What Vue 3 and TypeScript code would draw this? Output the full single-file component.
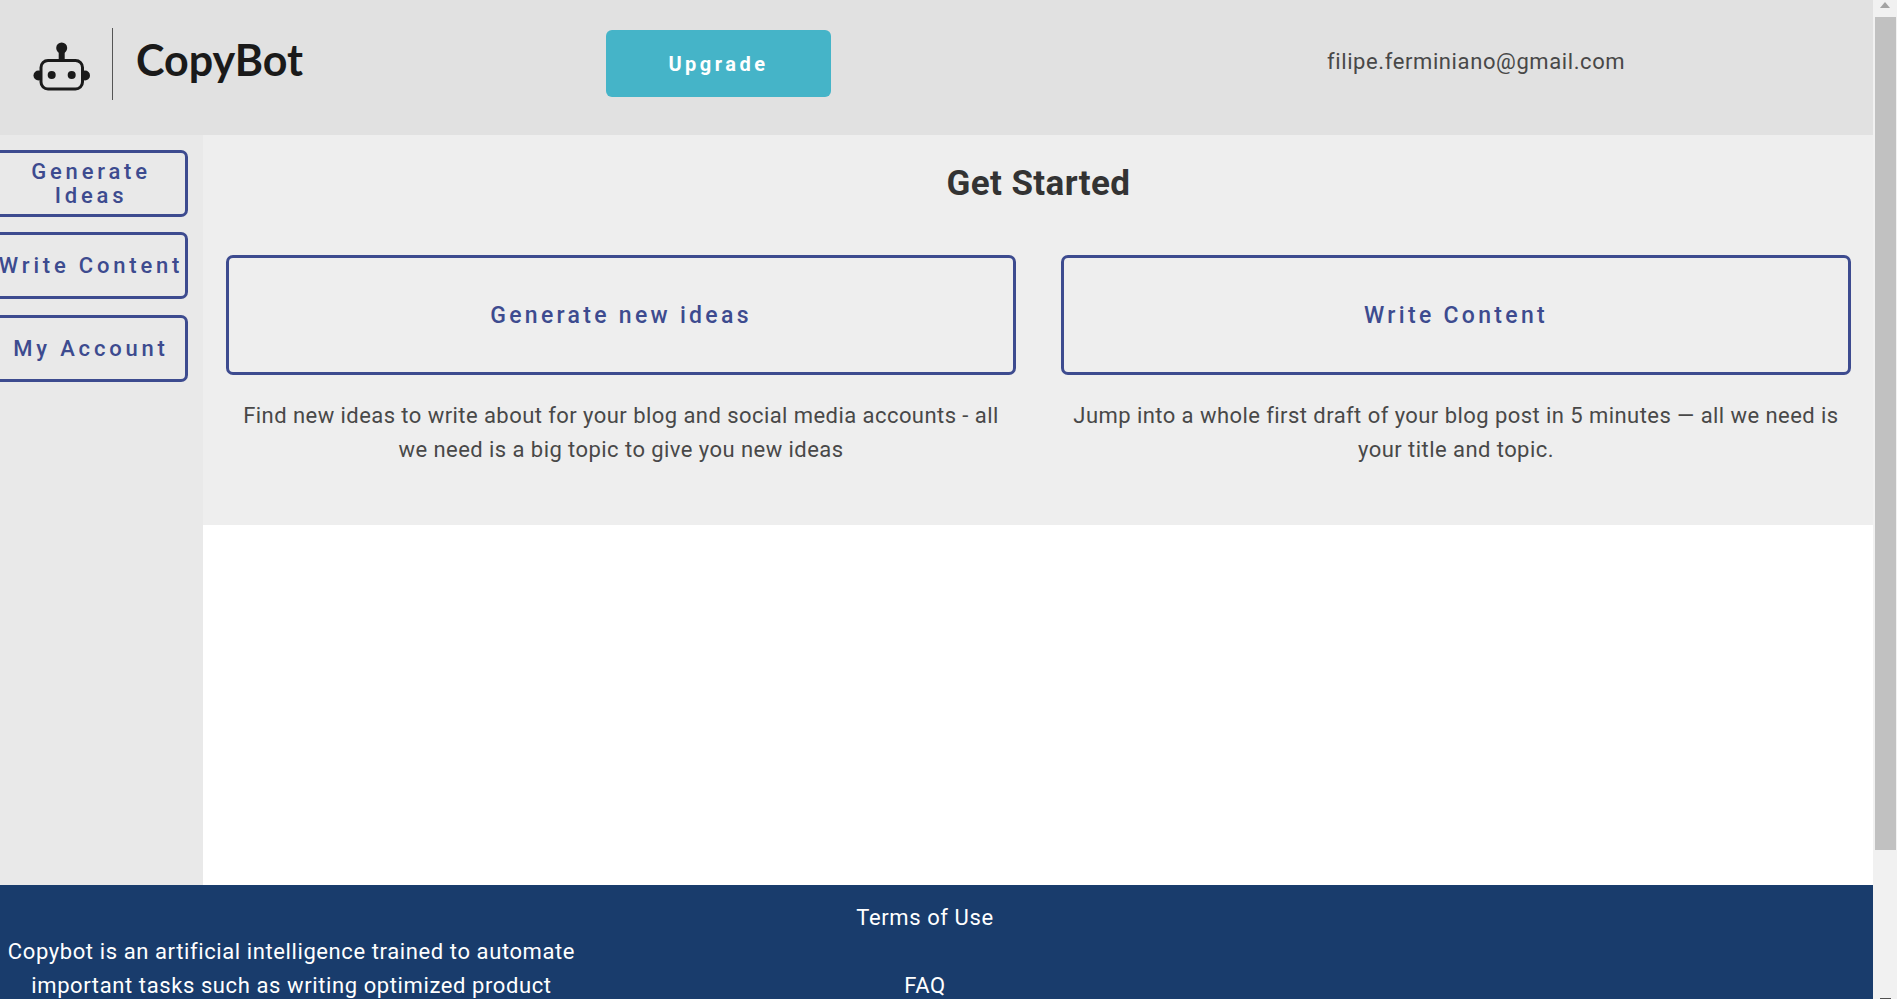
<script setup lang="ts">
const navItems: string[] = ['Generate Ideas', 'Write Content', 'My Account']
const cards: { title: string; text: string }[] = [
  {
    title: 'Generate new ideas',
    text: 'Find new ideas to write about for your blog and social media accounts - all we need is a big topic to give you new ideas',
  },
  {
    title: 'Write Content',
    text: 'Jump into a whole first draft of your blog post in 5 minutes — all we need is your title and topic.',
  },
]
</script>

<template>
  <div class="window">
    <div class="page">
      <header class="header">
        <div class="brand">
          <svg class="bot" viewBox="0 0 57 49" width="57" height="49" aria-hidden="true">
            <circle cx="28.7" cy="6" r="5.5" fill="#1a1a1a" />
            <rect x="25.7" y="8" width="6" height="10" fill="#1a1a1a" />
            <circle cx="5.5" cy="33.5" r="5" fill="#1a1a1a" />
            <circle cx="52" cy="33.5" r="5" fill="#1a1a1a" />
            <rect x="8" y="18.5" width="41.5" height="28.5" rx="7" fill="#e1e1e1" stroke="#1a1a1a" stroke-width="3" />
            <circle cx="18.7" cy="33" r="4" fill="#1a1a1a" />
            <circle cx="38.7" cy="33" r="4" fill="#1a1a1a" />
          </svg>
          <span class="divider"></span>
          <span class="logo-text">CopyBot</span>
        </div>
        <button class="upgrade" type="button">Upgrade</button>
        <span class="email">filipe.ferminiano@gmail.com</span>
      </header>
      <div class="body">
        <aside class="sidebar">
          <button v-for="item in navItems" :key="item" class="nav-btn" type="button">{{ item }}</button>
        </aside>
        <main class="main">
          <section class="panel">
            <h1 class="title">Get Started</h1>
            <div class="cards">
              <div v-for="card in cards" :key="card.title" class="card">
                <button class="card-btn" type="button">{{ card.title }}</button>
                <p class="card-text">{{ card.text }}</p>
              </div>
            </div>
          </section>
        </main>
      </div>
      <footer class="footer">
        <p class="about">Copybot is an artificial intelligence trained to automate important tasks such as writing optimized product</p>
        <ul class="links">
          <li>Terms of Use</li>
          <li class="spacer"></li>
          <li>FAQ</li>
        </ul>
      </footer>
    </div>
    <div class="scrollbar">
      <span class="arrow-up"></span>
      <span class="thumb"></span>
      <span class="arrow-down"></span>
    </div>
  </div>
</template>

<style>
html, body { margin: 0; overflow: hidden; }
</style>

<style scoped>
.window {
  display: flex;
  width: 1897px;
  height: 999px;
  overflow: hidden;
  font-family: Roboto, "Liberation Sans", sans-serif;
}
.page {
  width: 1873px;
  flex: none;
  display: flex;
  flex-direction: column;
  height: 999px;
  overflow: hidden;
}
.header {
  height: 135px;
  flex: none;
  background: #e1e1e1;
  display: flex;
  align-items: flex-start;
  box-sizing: border-box;
  padding-left: 33px;
}
.brand {
  width: 573px;
  flex: none;
  display: flex;
  align-items: flex-start;
}
.bot { margin-top: 42px; flex: none; }
.divider {
  width: 1px;
  height: 72px;
  margin: 28px 23px 0 22px;
  background: #555;
}
.logo-text {
  margin-top: 30px;
  font-family: Lato, sans-serif;
  font-weight: 700;
  font-size: 43px;
  line-height: 60px;
  color: #1a1a1a;
}
.upgrade {
  width: 225px;
  height: 67px;
  margin-top: 30px;
  flex: none;
  border: 0;
  border-radius: 6px;
  background: #45b4c8;
  color: #fff;
  font-family: inherit;
  font-weight: 700;
  font-size: 20px;
  letter-spacing: 3.5px;
  padding: 1px 0 0;
}
.email {
  margin: 47px 0 0 496px;
  font-size: 22px;
  line-height: 30px;
  letter-spacing: 0.6px;
  color: #484848;
}
.body {
  flex: none;
  height: 750px;
  display: flex;
}
.sidebar {
  width: 203px;
  flex: none;
  background: #e9e9e9;
  box-sizing: border-box;
  padding-top: 15px;
  display: flex;
  flex-direction: column;
  gap: 15px;
  overflow: hidden;
}
.nav-btn {
  width: 197px;
  height: 67px;
  margin-left: -9px;
  flex: none;
  box-sizing: border-box;
  padding: 1px 0 0 3px;
  background: transparent;
  border: 3px solid #3d4b8f;
  border-radius: 7px;
  color: #3d4b8f;
  font-family: inherit;
  font-weight: 500;
  font-size: 22px;
  line-height: 24px;
  letter-spacing: 3.8px;
}
.nav-btn:last-child { margin-top: 1px; }
.main {
  flex: 1;
  background: #fff;
}
.panel {
  height: 390px;
  background: #eee;
  box-sizing: border-box;
  padding: 0 22px 0 23px;
}
.title {
  margin: 0;
  padding-top: 27px;
  text-align: center;
  font-size: 35px;
  line-height: 44px;
  font-weight: 700;
  letter-spacing: 0.4px;
  color: #333;
}
.cards {
  margin-top: 49px;
  display: grid;
  grid-template-columns: 790px 790px;
  gap: 45px;
}
.card-btn {
  width: 100%;
  height: 120px;
  box-sizing: border-box;
  padding: 1px 0 0;
  background: transparent;
  border: 3px solid #3d4b8f;
  border-radius: 7px;
  color: #3d4b8f;
  font-family: inherit;
  font-weight: 500;
  font-size: 23px;
  letter-spacing: 3.3px;
}
.card-text {
  margin: 24px 0 0;
  padding: 0 10px;
  text-align: center;
  font-size: 22px;
  line-height: 34px;
  letter-spacing: 0.44px;
  color: #484848;
}
.footer {
  flex: 1;
  background: #193c6c;
  color: #fff;
  font-size: 22px;
  line-height: 34px;
  letter-spacing: 0.6px;
  display: flex;
}
.about {
  width: 583px;
  flex: none;
  margin: 50px 0 0;
  text-align: center;
}
.links {
  list-style: none;
  margin: 16px 0 0;
  padding: 0;
  width: 684px;
  text-align: center;
}
.spacer { height: 34px; }
.scrollbar {
  position: relative;
  width: 24px;
  flex: none;
  background: #f1f1f1;
}
.thumb {
  position: absolute;
  left: 2px;
  top: 17px;
  width: 21px;
  height: 833px;
  background: #c1c1c1;
}
.arrow-up {
  position: absolute;
  left: 7px;
  top: 2px;
  width: 0;
  height: 0;
  border-left: 5.5px solid transparent;
  border-right: 5.5px solid transparent;
  border-bottom: 6px solid #a3a3a3;
}
.arrow-down {
  position: absolute;
  left: 7px;
  top: 998px;
  width: 11px;
  height: 1px;
  background: #505050;
}
</style>
